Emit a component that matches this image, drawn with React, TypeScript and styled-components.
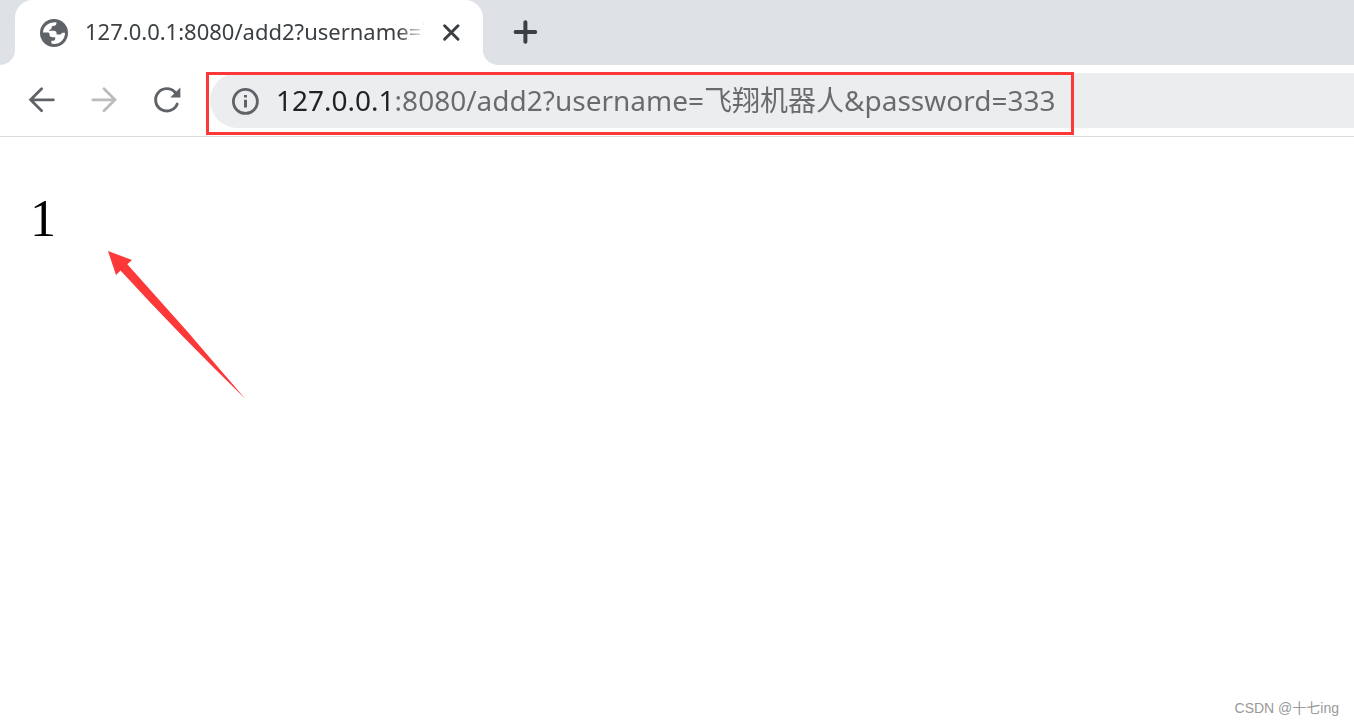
import React, { useState } from "react";
import styled, { createGlobalStyle } from "styled-components";

const GlobalStyle = createGlobalStyle`
  *, *::before, *::after { box-sizing: border-box; }
  body {
    margin: 0;
    background: #fff;
    font-family: "Noto Sans", "Noto Sans CJK SC", sans-serif;
  }
`;

const colors = {
  strip: "#dee1e6",
  icon: "#5f6368",
  iconDisabled: "#babcbe",
  mark: "#fc3838",
};

const Window = styled.div`
  display: flex;
  flex-direction: column;
  min-height: 100vh;
  position: relative;
  overflow: hidden;
`;

const TabStrip = styled.header`
  display: flex;
  height: 65px;
`;

const StripEdge = styled.div`
  width: 15px;
  background: ${colors.strip};
  border-bottom-right-radius: 15px;
`;

const TabSlot = styled.div`
  width: 468px;
  background: linear-gradient(${colors.strip} 50%, #fff 50%);
`;

const Tab = styled.div`
  display: flex;
  align-items: center;
  height: 65px;
  padding: 0 18px 0 24px;
  background: #fff;
  border-radius: 18px 18px 0 0;
`;

const TabTitle = styled.span`
  flex: 1;
  min-width: 0;
  margin-left: 16px;
  margin-right: 11px;
  padding-bottom: 3px;
  overflow: hidden;
  white-space: nowrap;
  font-size: 22px;
  line-height: 32px;
  color: #3c4043;
  mask-image: linear-gradient(to left, transparent, #000 28px);
`;

const StripRest = styled.div`
  flex: 1;
  display: flex;
  align-items: center;
  padding: 0 0 2px 25px;
  background: ${colors.strip};
  border-bottom-left-radius: 15px;
`;

const IconButton = styled.button<{ $size: number }>`
  display: flex;
  flex: none;
  align-items: center;
  justify-content: center;
  width: ${(p) => p.$size}px;
  height: ${(p) => p.$size}px;
  padding: 0;
  border: 0;
  border-radius: 50%;
  background: none;
  color: ${colors.icon};

  &:disabled {
    color: ${colors.iconDisabled};
  }
`;

const Toolbar = styled.nav`
  position: relative;
  display: flex;
  align-items: center;
  height: 72px;
  padding-left: 23px;
  border-bottom: 1px solid #dadce0;
`;

const NavButtons = styled.div`
  display: flex;
  gap: 24px;
  margin-right: 25px;
  padding-bottom: 1px;
`;

const Omnibox = styled.div`
  flex: 1;
  display: flex;
  align-items: center;
  height: 55px;
  padding-left: 20px;
  background: #ecedef;
  border-radius: 28px 0 0 28px;
`;

/* The host part of the address is darker than the rest of it. */
const AddressInput = styled.input`
  flex: 1;
  min-width: 0;
  height: 44px;
  margin-left: 16px;
  padding: 0 0 4px;
  border: 0;
  outline: 0;
  font: inherit;
  font-size: 28px;
  line-height: 40px;
  color: #686a6c;
  background: linear-gradient(to right, #202124 117px, #686a6c 117px);
  background-clip: text;
  -webkit-background-clip: text;
  -webkit-text-fill-color: transparent;
`;

const AddressMark = styled.div`
  position: absolute;
  top: 7px;
  left: 206px;
  width: 868px;
  height: 63px;
  border: 3px solid ${colors.mark};
  pointer-events: none;
`;

const Page = styled.main`
  position: relative;
  flex: 1;
  padding: 52px 30px;
`;

const Result = styled.p`
  margin: 0;
  font-family: "Liberation Serif", serif;
  font-size: 52px;
  line-height: 60px;
  color: #000;
`;

const PointerArrow = styled.svg`
  position: absolute;
  top: 114px;
  left: 108px;
`;

const Watermark = styled.small`
  position: absolute;
  right: 15px;
  bottom: 7px;
  font-family: "Liberation Sans", "Noto Sans CJK SC", sans-serif;
  font-size: 14px;
  line-height: 20px;
  color: #999;
`;

function GlobeIcon() {
  return (
    <svg width="30" height="30" viewBox="0 0 30 30" aria-hidden="true">
      <circle cx="15" cy="15" r="14" fill={colors.icon} />
      <path
        d="M4 14.6 C4.2 8.4 9.4 3.8 17.4 4.2 V5.4 C17.4 7 16 7.6 14.6 7.8 C13.2 8 12.6 8.6 12.6 9.8 C12.6 11.2 11.6 11.6 10.2 11.8 V12.8 H14.6 C16.8 12.8 17.6 14 17.6 15.6 V16.6 H20.4 C22 16.6 22.6 16 23 14.8 H26 C26 21.5 21.2 26 15 26 C14 26 13.2 25.9 12.4 25.6 V22.8 H14.4 C15.8 22.8 16.2 21.8 16.2 20.6 V19.2 H13.4 C11.6 19.2 10.6 18.4 10.6 17 C10.6 15.2 9.8 14.6 8.4 14.6 Z"
        fill="#fff"
      />
    </svg>
  );
}

function CloseIcon() {
  return (
    <svg width="20" height="20" viewBox="0 0 20 20" aria-hidden="true">
      <path d="M3.6 2.8 L17 16.2 M17 2.8 L3.6 16.2" stroke="#3c4043" strokeWidth="3" strokeLinecap="round" />
    </svg>
  );
}

function PlusIcon() {
  return (
    <svg width="26" height="26" viewBox="0 0 26 26" aria-hidden="true">
      <path d="M13.4 3.2 V22.8 M3.6 13 H23.2" stroke="#3c4043" strokeWidth="4" strokeLinecap="round" />
    </svg>
  );
}

function ArrowIcon({ forward = false }: { forward?: boolean }) {
  return (
    <svg
      width="28"
      height="28"
      viewBox="0 0 28 28"
      fill="none"
      stroke="currentColor"
      strokeWidth="2.8"
      strokeLinecap="round"
      aria-hidden="true"
    >
      <path
        d={
          forward
            ? "M2.8 13.8 H24.6 M14 2.8 L25 13.8 L14 24.8"
            : "M25.4 13.8 H3.2 M13.6 2.8 L2.6 13.8 L13.6 24.8"
        }
      />
    </svg>
  );
}

function ReloadIcon() {
  return (
    <svg width="30" height="28" viewBox="-1 0 30 28" aria-hidden="true">
      <path
        d="M25.2 18 A11.2 11.2 0 1 1 23 6.2"
        fill="none"
        stroke="currentColor"
        strokeWidth="2.9"
        strokeLinecap="round"
      />
      <path d="M28.4 1.6 V11.6 H18.2 Z" fill="currentColor" />
    </svg>
  );
}

function InfoIcon() {
  return (
    <svg width="30" height="30" viewBox="0 0 30 30" aria-hidden="true">
      <circle cx="15.4" cy="15.4" r="12" fill="none" stroke="currentColor" strokeWidth="2.8" />
      <path d="M14 9 H17 V11.6 H14 Z M14 13.8 H17 V21.6 H14 Z" fill="currentColor" />
    </svg>
  );
}

export default function App() {
  const [address, setAddress] = useState("127.0.0.1:8080/add2?username=飞翔机器人&password=333");

  return (
    <>
      <GlobalStyle />
      <Window>
        <TabStrip>
          <StripEdge />
          <TabSlot>
            <Tab>
              <GlobeIcon />
              <TabTitle>127.0.0.1:8080/add2?username=飞</TabTitle>
              <IconButton $size={28} aria-label="Close tab">
                <CloseIcon />
              </IconButton>
            </Tab>
          </TabSlot>
          <StripRest>
            <IconButton $size={34} aria-label="New tab">
              <PlusIcon />
            </IconButton>
          </StripRest>
        </TabStrip>

        <Toolbar>
          <NavButtons>
            <IconButton $size={38} aria-label="Back">
              <ArrowIcon />
            </IconButton>
            <IconButton $size={38} aria-label="Forward" disabled>
              <ArrowIcon forward />
            </IconButton>
            <IconButton $size={38} aria-label="Reload">
              <ReloadIcon />
            </IconButton>
          </NavButtons>
          <Omnibox>
            <IconButton $size={30} aria-label="Site information">
              <InfoIcon />
            </IconButton>
            <AddressInput
              aria-label="Address"
              value={address}
              spellCheck={false}
              onChange={(e) => setAddress(e.target.value)}
            />
          </Omnibox>
          <AddressMark />
        </Toolbar>

        <Page>
          <Result>1</Result>
          <PointerArrow width="138" height="149" viewBox="0 0 138 149" aria-hidden="true">
            <path
              d="M0 0 L24 9 L19.3 13.3 Q79.5 79.5 137.4 148 Q73 85.5 12.5 19.6 L8 24 Z"
              fill={colors.mark}
            />
          </PointerArrow>
        </Page>
        <Watermark>CSDN @十七ing</Watermark>
      </Window>
    </>
  );
}
